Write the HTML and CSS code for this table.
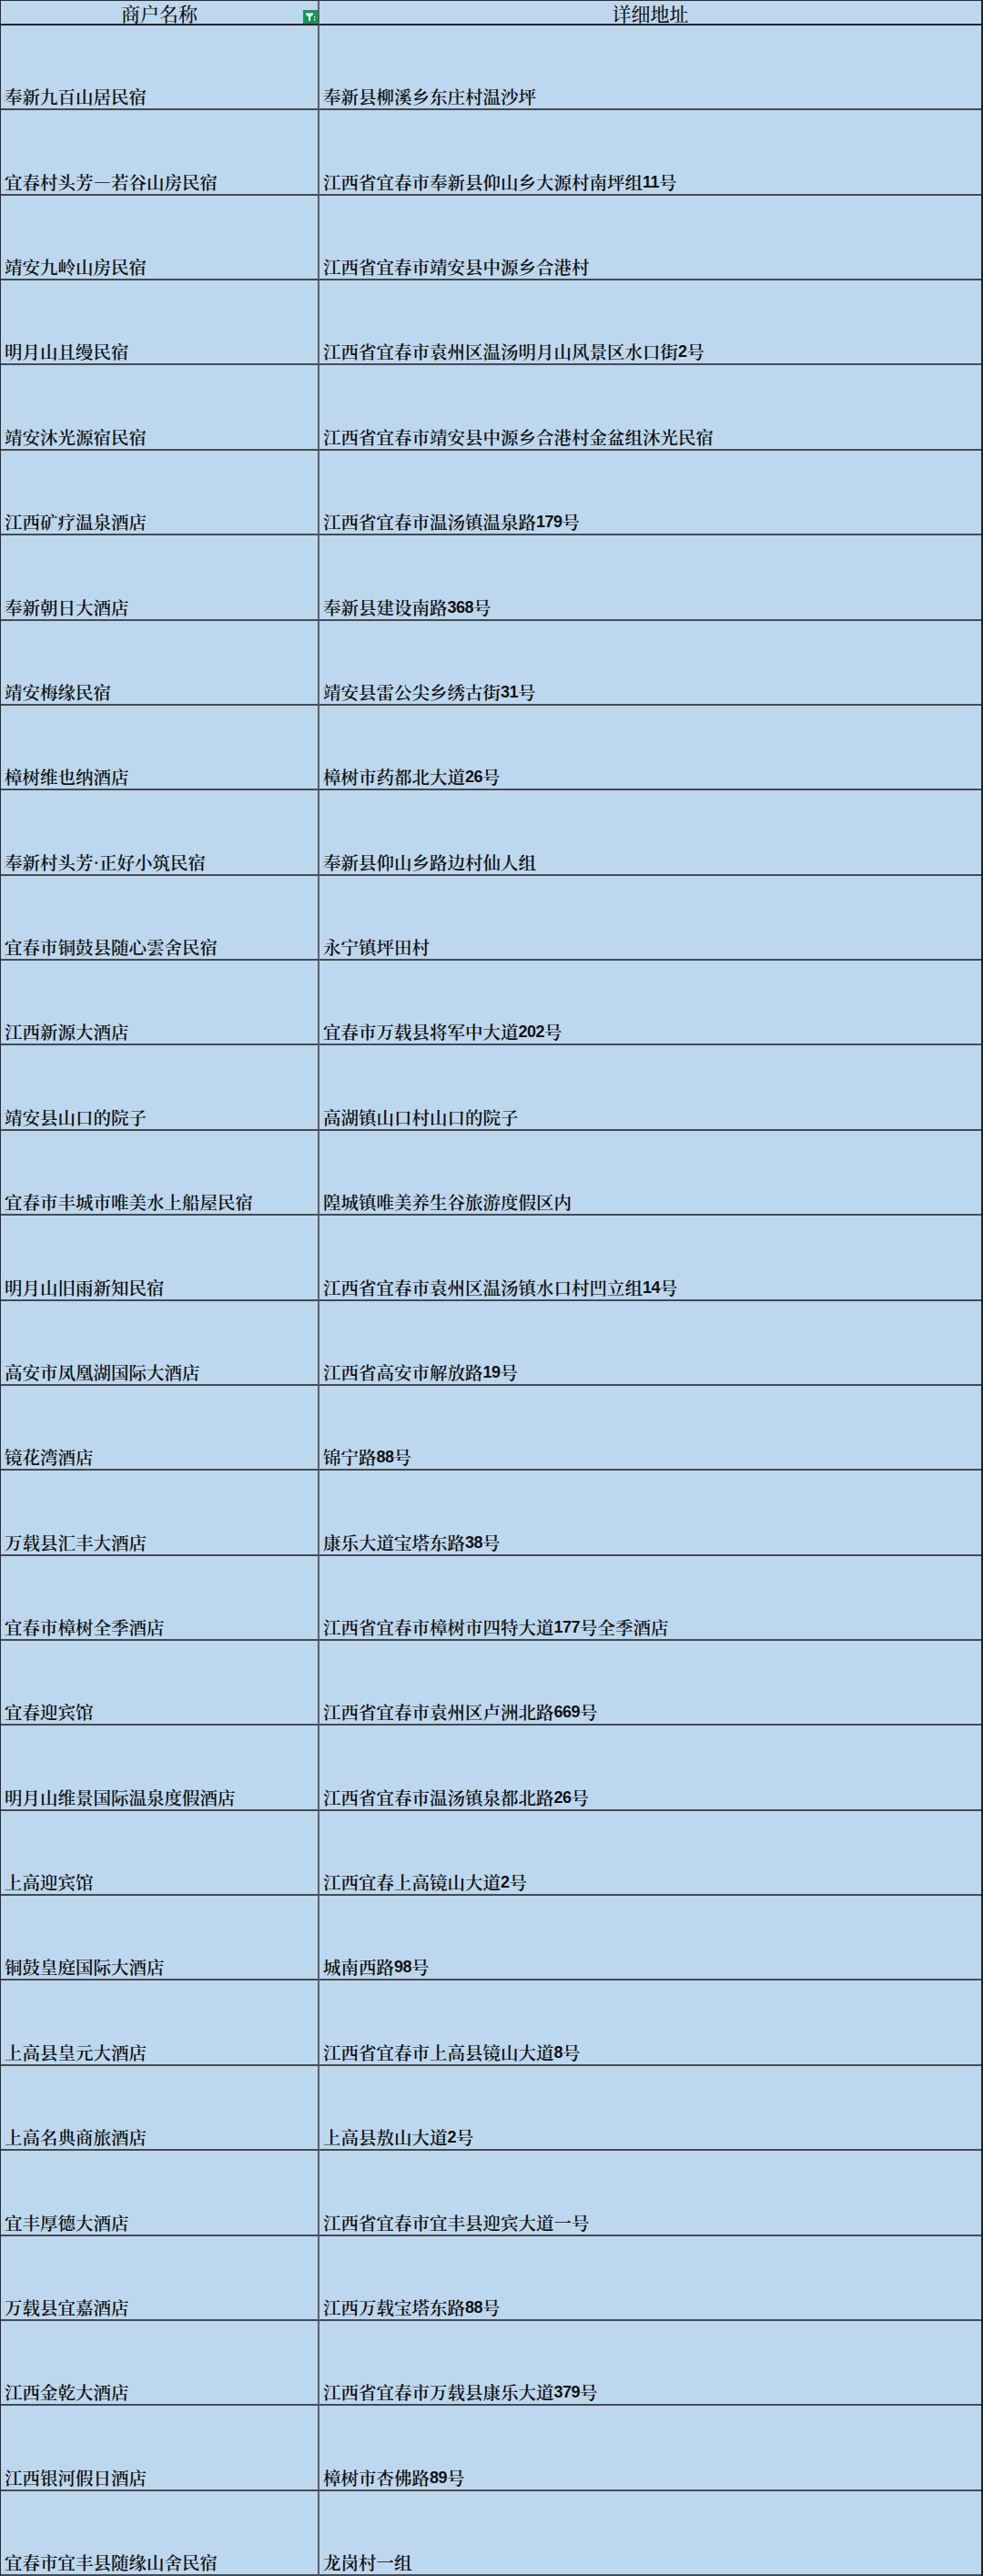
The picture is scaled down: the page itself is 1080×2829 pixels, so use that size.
FILE: index.html
```html
<!DOCTYPE html>
<html lang="zh-CN">
<head>
<meta charset="utf-8">
<title>商户名称 详细地址</title>
<link rel="stylesheet" href="styles.css">
</head>
<body>
<div class="sheet">
  <div class="cell head name-col"><span class="head-text">商户名称</span>
    <span class="filter"><svg viewBox="0 0 16 15" width="16" height="15"><rect width="16" height="15" fill="#17965a"/><path d="M3 3.5h8v1.6L8.1 7.6V12H6V7.6L3 5.1z" fill="#fff"/><rect x="12" y="7" width="1.4" height="1.4" fill="#fff"/><rect x="12" y="10" width="1.4" height="1.4" fill="#fff"/></svg></span>
  </div>
  <div class="cell head"><span class="head-text">详细地址</span></div>

  <div class="cell name-col">奉新九百山居民宿</div><div class="cell addr">奉新县柳溪乡东庄村温沙坪</div>
  <div class="cell name-col">宜春村头芳—若谷山房民宿</div><div class="cell addr">江西省宜春市奉新县仰山乡大源村南坪组<span class="num">11</span>号</div>
  <div class="cell name-col">靖安九岭山房民宿</div><div class="cell addr">江西省宜春市靖安县中源乡合港村</div>
  <div class="cell name-col">明月山且缦民宿</div><div class="cell addr">江西省宜春市袁州区温汤明月山风景区水口街<span class="num">2</span>号</div>
  <div class="cell name-col">靖安沐光源宿民宿</div><div class="cell addr">江西省宜春市靖安县中源乡合港村金盆组沐光民宿</div>
  <div class="cell name-col">江西矿疗温泉酒店</div><div class="cell addr">江西省宜春市温汤镇温泉路<span class="num">179</span>号</div>
  <div class="cell name-col">奉新朝日大酒店</div><div class="cell addr">奉新县建设南路<span class="num">368</span>号</div>
  <div class="cell name-col">靖安梅缘民宿</div><div class="cell addr">靖安县雷公尖乡绣古街<span class="num">31</span>号</div>
  <div class="cell name-col">樟树维也纳酒店</div><div class="cell addr">樟树市药都北大道<span class="num">26</span>号</div>
  <div class="cell name-col">奉新村头芳·正好小筑民宿</div><div class="cell addr">奉新县仰山乡路边村仙人组</div>
  <div class="cell name-col">宜春市铜鼓县随心雲舍民宿</div><div class="cell addr">永宁镇坪田村</div>
  <div class="cell name-col">江西新源大酒店</div><div class="cell addr">宜春市万载县将军中大道<span class="num">202</span>号</div>
  <div class="cell name-col">靖安县山口的院子</div><div class="cell addr">高湖镇山口村山口的院子</div>
  <div class="cell name-col">宜春市丰城市唯美水上船屋民宿</div><div class="cell addr">隍城镇唯美养生谷旅游度假区内</div>
  <div class="cell name-col">明月山旧雨新知民宿</div><div class="cell addr">江西省宜春市袁州区温汤镇水口村凹立组<span class="num">14</span>号</div>
  <div class="cell name-col">高安市凤凰湖国际大酒店</div><div class="cell addr">江西省高安市解放路<span class="num">19</span>号</div>
  <div class="cell name-col">镜花湾酒店</div><div class="cell addr">锦宁路<span class="num">88</span>号</div>
  <div class="cell name-col">万载县汇丰大酒店</div><div class="cell addr">康乐大道宝塔东路<span class="num">38</span>号</div>
  <div class="cell name-col">宜春市樟树全季酒店</div><div class="cell addr">江西省宜春市樟树市四特大道<span class="num">177</span>号全季酒店</div>
  <div class="cell name-col">宜春迎宾馆</div><div class="cell addr">江西省宜春市袁州区卢洲北路<span class="num">669</span>号</div>
  <div class="cell name-col">明月山维景国际温泉度假酒店</div><div class="cell addr">江西省宜春市温汤镇泉都北路<span class="num">26</span>号</div>
  <div class="cell name-col">上高迎宾馆</div><div class="cell addr">江西宜春上高镜山大道<span class="num">2</span>号</div>
  <div class="cell name-col">铜鼓皇庭国际大酒店</div><div class="cell addr">城南西路<span class="num">98</span>号</div>
  <div class="cell name-col">上高县皇元大酒店</div><div class="cell addr">江西省宜春市上高县镜山大道<span class="num">8</span>号</div>
  <div class="cell name-col">上高名典商旅酒店</div><div class="cell addr">上高县敖山大道<span class="num">2</span>号</div>
  <div class="cell name-col">宜丰厚德大酒店</div><div class="cell addr">江西省宜春市宜丰县迎宾大道一号</div>
  <div class="cell name-col">万载县宜嘉酒店</div><div class="cell addr">江西万载宝塔东路<span class="num">88</span>号</div>
  <div class="cell name-col">江西金乾大酒店</div><div class="cell addr">江西省宜春市万载县康乐大道<span class="num">379</span>号</div>
  <div class="cell name-col">江西银河假日酒店</div><div class="cell addr">樟树市杏佛路<span class="num">89</span>号</div>
  <div class="cell name-col">宜春市宜丰县随缘山舍民宿</div><div class="cell addr">龙岗村一组</div>
</div>
</body>
</html>
```

FILE: styles.css
```css
html, body {
  margin: 0;
  padding: 0;
  background: #bdd7ee;
}

.sheet {
  box-sizing: border-box;
  width: 1080px;
  height: 2829px;
  display: grid;
  grid-template-columns: 350px 1fr;
  grid-template-rows: 27px repeat(30, 1fr);
  background: #bdd7ee;
  border-top: 1px solid #2a2d31;
  border-left: 1px solid #2a2d31;
  border-right: 2px solid #1f2328;
  font-family: "Noto Serif CJK SC", "Noto Sans CJK SC", serif;
  color: #111;
}

.cell {
  box-sizing: border-box;
  border-bottom: 2px solid #454b52;
  display: flex;
  align-items: flex-end;
  padding: 0 4px 1px 4px;
  font-size: 19.5px;
  font-weight: 600;
  line-height: 24px;
  white-space: nowrap;
  overflow: hidden;
}

.name-col {
  border-right: 2px solid #5a6068;
}

.addr {
  padding-left: 4px;
}

.head {
  position: relative;
  justify-content: center;
  align-items: center;
  padding: 0;
  overflow: visible;
  border-bottom: 2px solid #22262b;
}

.head-text {
  font-size: 21px;
  font-weight: 500;
  line-height: 25px;
  display: block;
  margin-top: 1px;
}

.filter {
  position: absolute;
  right: 0;
  bottom: 0;
  width: 16px;
  height: 15px;
  display: block;
  line-height: 0;
}

.num {
  font-family: "Liberation Sans", sans-serif;
  font-weight: bold;
  font-size: 18px;
  letter-spacing: -0.5px;
}
```
